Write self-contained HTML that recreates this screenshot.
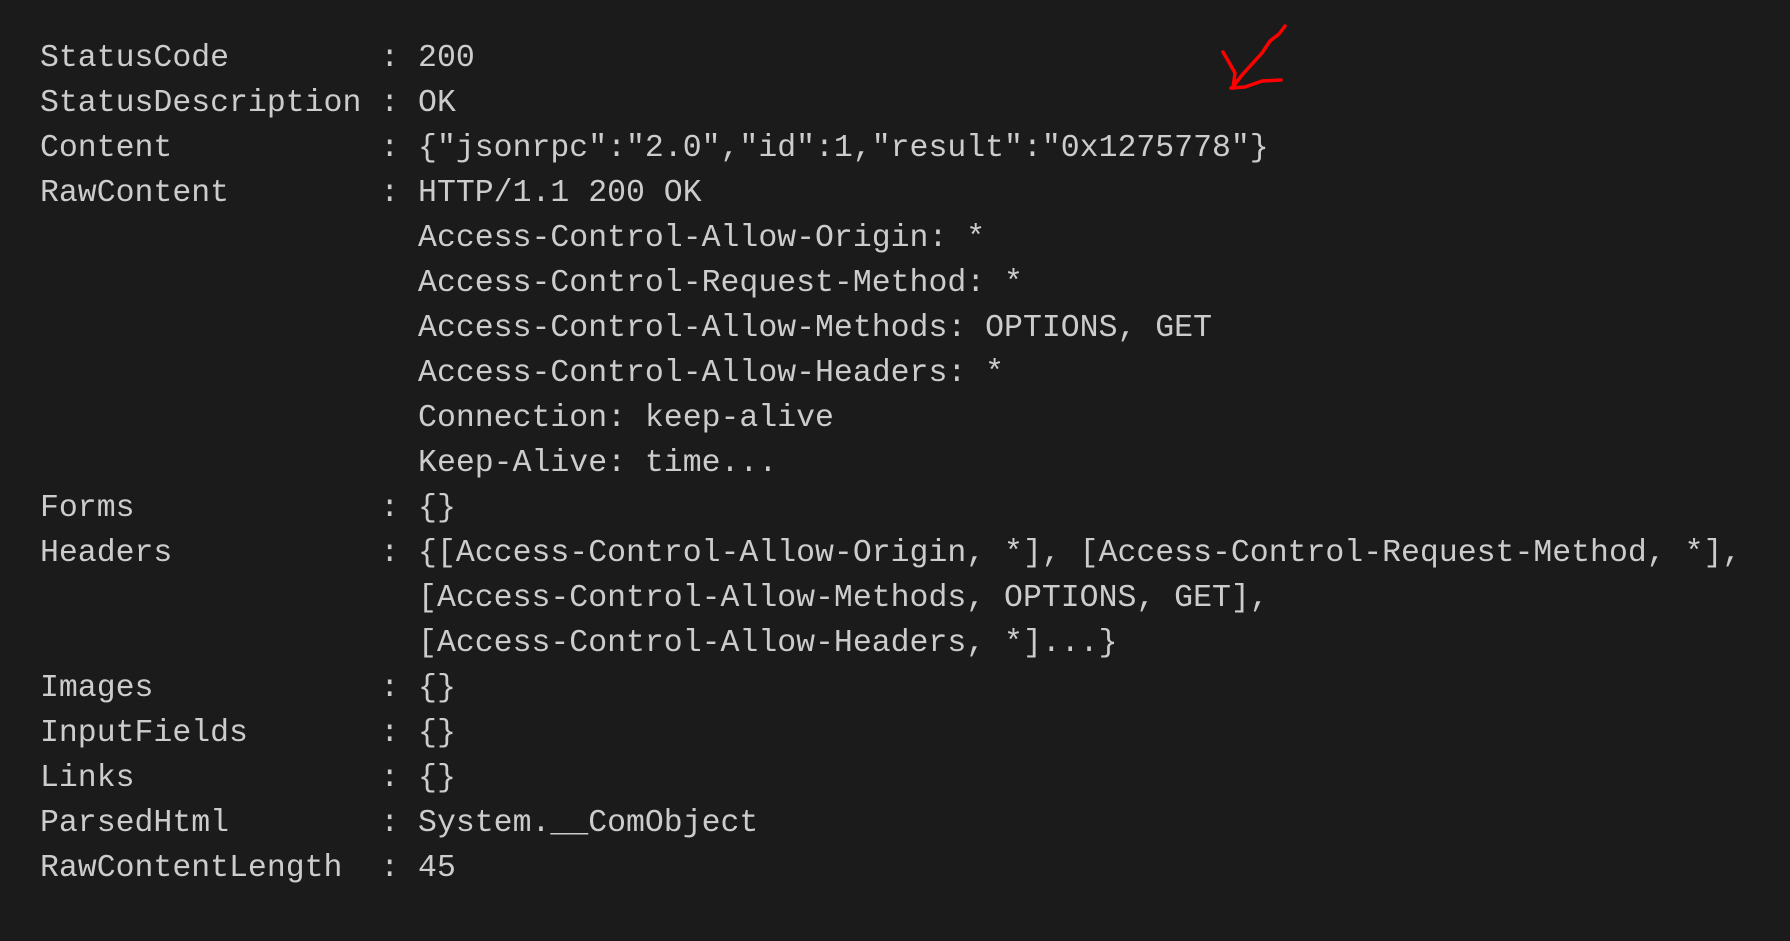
<!DOCTYPE html>
<html><head><meta charset="utf-8"><style>
html,body{margin:0;padding:0;background:#1b1b1b;width:1790px;height:941px;overflow:hidden}
pre{margin:0;position:absolute;left:40px;top:36px;font-family:"Liberation Mono",monospace;font-size:31.5px;line-height:45px;color:#cccccc;white-space:pre}
svg{position:absolute;left:0;top:0}
</style></head><body>
<pre>StatusCode        : 200
StatusDescription : OK
Content           : {"jsonrpc":"2.0","id":1,"result":"0x1275778"}
RawContent        : HTTP/1.1 200 OK
                    Access-Control-Allow-Origin: *
                    Access-Control-Request-Method: *
                    Access-Control-Allow-Methods: OPTIONS, GET
                    Access-Control-Allow-Headers: *
                    Connection: keep-alive
                    Keep-Alive: time...
Forms             : {}
Headers           : {[Access-Control-Allow-Origin, *], [Access-Control-Request-Method, *],
                    [Access-Control-Allow-Methods, OPTIONS, GET],
                    [Access-Control-Allow-Headers, *]...}
Images            : {}
InputFields       : {}
Links             : {}
ParsedHtml        : System.__ComObject
RawContentLength  : 45</pre>
<svg width="1790" height="941"><path d="M1285 26 L1279 34 L1270 41 L1262 53 L1252 64 L1242 75 L1232 88 M1223 52 L1230 64 L1235 73 L1233 88 M1231 88 L1245 87 L1262 81 L1281 80" fill="none" stroke="#ff0000" stroke-width="3.5" stroke-linecap="round" stroke-linejoin="round"/></svg>
</body></html>
